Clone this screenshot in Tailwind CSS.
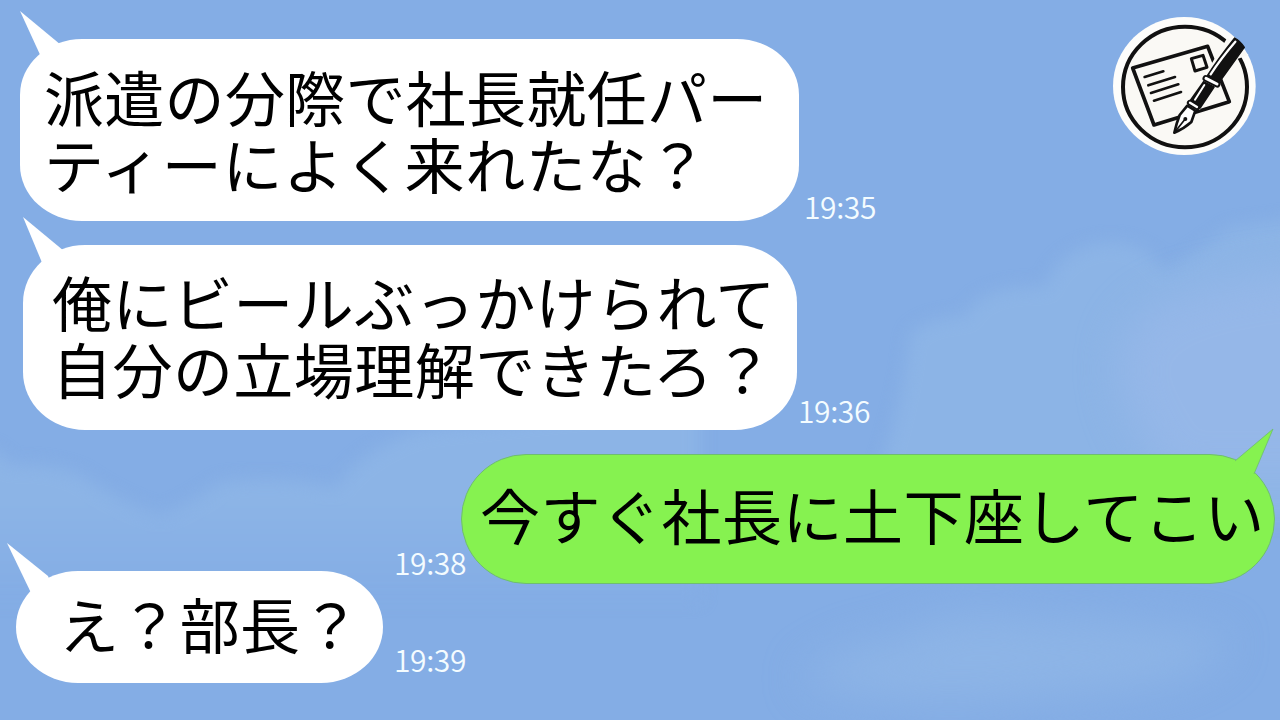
<!DOCTYPE html>
<html lang="ja">
<head>
    <meta charset="UTF-8">
    <meta name="viewport" content="width=device-width, initial-scale=1.0">
    <title>トーク</title>
    <script src="https://cdn.jsdelivr.net/npm/@tailwindcss/browser@4"></script>
</head>
<body class="relative w-[1280px] h-[720px] overflow-hidden bg-[#84ade5] font-['Noto_Sans_CJK_JP',sans-serif] text-black">
    <!-- Sky with faint clouds -->
    <svg class="absolute inset-0 w-full h-full" viewBox="0 0 1280 720" aria-hidden="true">
        <defs>
            <filter id="soft" filterUnits="userSpaceOnUse" x="-100" y="0" width="1500" height="900" color-interpolation-filters="sRGB"><feGaussianBlur stdDeviation="8" /></filter>
            <filter id="softer" filterUnits="userSpaceOnUse" x="-100" y="0" width="1500" height="900" color-interpolation-filters="sRGB"><feGaussianBlur stdDeviation="20" /></filter>
            <linearGradient id="fade" gradientUnits="userSpaceOnUse" x1="0" y1="500" x2="0" y2="590">
                <stop offset="0" stop-color="#8cb4e6" />
                <stop offset="1" stop-color="#84ade5" />
            </linearGradient>
        </defs>
        <g filter="url(#soft)">
            <path d="M910 335 Q925 318 965 316 Q980 284 1045 287 Q1060 246 1110 242 Q1150 244 1165 272 Q1200 250 1230 228 L1350 212 V520 H860 Q900 430 910 335 Z" fill="#8cb4e6" />
            <path d="M-60 445 Q-5 440 10 465 Q50 462 80 475 Q115 500 160 515 Q190 505 220 482 Q290 475 335 488 Q360 450 420 430 L700 400 V600 H-60 Z" fill="url(#fade)" />
        </g>
        <g filter="url(#softer)">
            <path d="M1150 310 Q1200 275 1380 265 V480 H1170 Q1080 360 1150 310 Z" fill="#95b7e8" />
            <path d="M800 680 Q850 640 900 640 Q950 600 1040 620 Q1150 620 1230 640 Q1200 690 1060 695 Q900 715 800 680 Z" fill="#8db4e6" />
        </g>
    </svg>

    <main class="relative flex flex-col h-full pt-[39px]">
        <div class="flex items-end pl-5">
            <div class="relative w-[779px] h-[182px] shrink-0 pl-6 pt-[23px] bg-white rounded-[62px/56px]">
                <svg class="absolute left-0 -top-7 w-12 h-12 text-white" viewBox="0 0 48 48" fill="currentColor"><path d="M0 0 L41 34 L46 46 L22 48 Z" /></svg>
                <p class="relative text-[60px] leading-[67px] tracking-[0.3px] whitespace-nowrap">派遣の分際で社長就任パー</p>
                <p class="relative text-[60px] leading-[67px] tracking-[0.7px] whitespace-nowrap">ティーによく来れたな？</p>
            </div>
            <time class="ml-[5px] mb-[-5px] text-[30px] leading-10 tracking-[-0.4px] font-[350] text-[#f4fcff]">19:35</time>
        </div>

        <div class="flex items-end mt-6 pl-[23px]">
            <div class="relative w-[774px] h-[185px] shrink-0 pl-[29px] pt-[22px] bg-white rounded-[62px/58px]">
                <svg class="absolute left-0 -top-7 w-12 h-12 text-white" viewBox="0 0 48 48" fill="currentColor"><path d="M0 0 L41 34 L46 46 L20 48 Z" /></svg>
                <p class="relative text-[60px] leading-[67px] tracking-[0.45px] whitespace-nowrap">俺にビールぶっかけられて<br>自分の立場理解できたろ？</p>
            </div>
            <time class="ml-px text-[30px] leading-10 tracking-[-0.4px] font-[350] text-[#f4fcff]">19:36</time>
        </div>

        <div class="flex items-end justify-end mt-6 pr-[5px]">
            <time class="mr-[-5px] mb-[2px] text-[30px] leading-10 tracking-[-0.4px] font-[350] text-[#f4fcff]">19:38</time>
            <div class="relative w-[814px] h-[130px] shrink-0 pl-[18px] pt-[25px] bg-[#86f250] border border-[#6fbd70] rounded-[65px]">
                <svg class="absolute right-0 -top-[27px] w-12 h-14" viewBox="0 0 48 56"><path d="M9 33 L47 1 L28 46 L20 56 L4 40 Z" fill="#86f250" /><path d="M9 33 L47 1 L28 46" fill="none" stroke="#6fbd70" stroke-width="0.8" /></svg>
                <p class="relative text-[60px] leading-[67px] tracking-[0.5px] whitespace-nowrap">今すぐ社長に土下座してこい</p>
            </div>
        </div>

        <div class="flex items-end mt-[-13px] pl-4">
            <div class="relative w-[367px] h-[112px] shrink-0 pl-[43px] pt-[18px] bg-white rounded-[62px/56px]">
                <svg class="absolute -left-[9px] -top-7 w-14 h-14 text-white" viewBox="0 0 56 56" fill="currentColor"><path d="M0 0 L41 33 L46 46 L26 54 Z" /></svg>
                <p class="relative text-[60px] leading-[67px] tracking-[0.35px] whitespace-nowrap">え？部長？</p>
            </div>
            <time class="ml-[11px] mb-1 text-[30px] leading-10 tracking-[-0.4px] font-[350] text-[#f4fcff]">19:39</time>
        </div>
    </main>

    <!-- Channel badge: letter and fountain pen -->
    <svg class="absolute left-[1100px] top-[5px] w-[170px] h-[160px]" viewBox="0 0 510 480" fill="none" stroke="#111" stroke-linejoin="round" stroke-linecap="round">
        <ellipse cx="253" cy="243" rx="214" ry="207" fill="#fdfdfb" stroke="none" />
        <ellipse cx="255" cy="246" rx="186" ry="181" fill="#faf9f5" stroke-width="12" />
        <path d="M98 189 L323 124 L388 290 L162 360 Z" stroke-width="11" />
        <path d="M274 161 L309 151 L321 187 L285 198 Z" stroke-width="9" />
        <path d="M134 216 L190 199 M145 241 L225 216 M153 264 L235 238 M162 287 L243 261" stroke-width="8" />
        <!-- pen -->
        <path d="M382 98 L446 150 L412 162 L340 256 L300 314 L258 296 L312 214 Z" fill="#faf9f5" stroke="none" />
        <path d="M318 218 Q355 160 404 99 Q421 108 433 127 L354 237 Z" fill="#111" stroke-width="4" />
        <path d="M332 208 Q362 161 406 110" stroke="#fff" stroke-width="7" />
        <path d="M311 230 L342 246 L300 309 L270 288 Z" fill="#111" stroke-width="5" />
        <path d="M313 240 L285 284" stroke="#fff" stroke-width="6" />
        <path d="M317 220 L352 238" stroke="#111" stroke-width="19" />
        <path d="M318 220 L351 237" stroke="#fff" stroke-width="9" />
        <path d="M269 293 L292 307" stroke="#111" stroke-width="17" />
        <path d="M270 293 L291 306" stroke="#fff" stroke-width="7" />
        <path d="M262 302 L239 330 Q229 356 223 383 Q252 371 274 351 L286 317 Z" fill="#fff" stroke-width="8" />
        <path d="M224 382 L255 343" stroke-width="5" />
        <circle cx="256" cy="342" r="6" fill="#111" stroke="none" />
    </svg>
</body>
</html>
